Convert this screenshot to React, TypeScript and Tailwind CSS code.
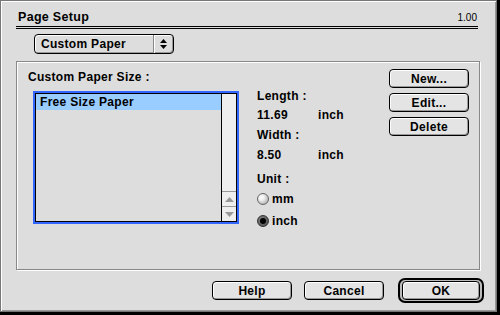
import React from 'react'

// Mac OS 9 style push button
function Btn({ label, w = 'w-[80px]' }: { label: string; w?: string }) {
  return (
    <div
      className={`${w} h-[19px] rounded-[4px] border border-black bg-[#e4e4e4] shadow-[inset_1px_1px_0_#fff,inset_-1px_-1px_0_#999] flex items-center justify-center leading-[14px]`}
    >
      {label}
    </div>
  )
}

function Radio({ on, label }: { on?: boolean; label: string }) {
  return (
    <div className="h-[14px] flex items-center gap-[3px] leading-[14px]">
      {on ? (
        <div className="w-[12px] h-[12px] rounded-full border border-[#333] bg-[radial-gradient(circle_at_40%_40%,#888,#444)] flex items-center justify-center">
          <div className="w-[6px] h-[6px] rounded-full bg-black" />
        </div>
      ) : (
        <div className="w-[12px] h-[12px] rounded-full border border-[#666] bg-[radial-gradient(circle_at_35%_35%,#fff,#eee_30%,#999)]" />
      )}
      <span>{label}</span>
    </div>
  )
}

export default function App() {
  return (
    <div className="w-[500px] h-[315px] bg-black font-['Liberation_Sans',Arial,sans-serif] text-[12px] font-bold tracking-[0.3px] text-black">
      <div className="w-[497px] h-[312px] bg-[#dddddd] border border-[#777] shadow-[inset_1px_1px_0_#fff,inset_-1px_-1px_0_#999] flex flex-col">
        {/* title */}
        <div className="ml-[15px] w-[462px] mt-[9px] flex items-end justify-between border-b-[3px] border-double border-black pb-[2px]">
          <span className="pl-[2px] h-[14px] leading-[14px] text-[12.5px]">Page Setup</span>
          <span className="pr-[1px] text-[10px] font-normal tracking-normal leading-[12px]">1.00</span>
        </div>

        {/* popup */}
        <div className="ml-[33px] mt-[5px] w-[140px] h-[20px] rounded-[4px] border border-black bg-[#dddddd] shadow-[inset_1px_1px_0_#fff,inset_-1px_-1px_0_#999] flex">
          <div className="flex-1 pl-[6px] flex items-center leading-[14px]">Custom Paper</div>
          <div className="w-[20px] border-l border-[#888] shadow-[inset_1px_0_0_#fff] flex flex-col items-center justify-center gap-[2px]">
            <svg width="7" height="4" viewBox="0 0 7 4"><path d="M0 4h7L3.5 0z" fill="#000" /></svg>
            <svg width="7" height="4" viewBox="0 0 7 4"><path d="M0 0h7L3.5 4z" fill="#000" /></svg>
          </div>
        </div>

        {/* group box */}
        <div className="ml-[15px] mt-[7px] w-[464px] h-[209px] border border-[#888] shadow-[1px_1px_0_#fff,inset_1px_1px_0_#fff] flex">
          {/* left column */}
          <div className="w-[240px] pl-[11px] pt-[8px] flex flex-col">
            <div className="h-[14px] leading-[14px]">Custom Paper Size :</div>
            <div className="ml-[5px] mt-[7px] w-[206px] h-[133px] border-2 border-[#3366ff]">
              <div className="w-full h-full border border-black flex">
                <div className="flex-1 flex flex-col">
                  <div className="h-[16px] bg-[#99ccff] pl-[4px] leading-[16px]">Free Size Paper</div>
                </div>
                <div className="w-[15px] border-l border-black bg-[#eeeeee] flex flex-col justify-end">
                  <div className="h-[15px] border-t border-[#999] flex items-center justify-center">
                    <svg width="9" height="5" viewBox="0 0 9 5"><path d="M0 5h9L4.5 0z" fill="#999" /></svg>
                  </div>
                  <div className="h-[15px] border-t border-[#999] flex items-center justify-center">
                    <svg width="9" height="5" viewBox="0 0 9 5"><path d="M0 0h9L4.5 5z" fill="#999" /></svg>
                  </div>
                </div>
              </div>
            </div>
          </div>

          {/* middle column */}
          <div className="w-[132px] pt-[27px] flex flex-col">
            <div className="h-[14px] leading-[14px]">Length :</div>
            <div className="mt-[5px] h-[14px] leading-[14px] flex">
              <span className="w-[61px]">11.69</span>
              <span>inch</span>
            </div>
            <div className="mt-[6px] h-[14px] leading-[14px]">Width :</div>
            <div className="mt-[6px] h-[14px] leading-[14px] flex">
              <span className="w-[61px]">8.50</span>
              <span>inch</span>
            </div>
            <div className="mt-[10px] h-[14px] leading-[14px]">Unit :</div>
            <div className="mt-[6px]">
              <Radio label="mm" />
            </div>
            <div className="mt-[8px]">
              <Radio on label="inch" />
            </div>
          </div>

          {/* buttons */}
          <div className="pt-[7px] flex flex-col gap-[5px]">
            <Btn label="New..." />
            <Btn label="Edit..." />
            <Btn label="Delete" />
          </div>
        </div>

        {/* bottom buttons */}
        <div className="mt-[8px] h-[25px] flex items-center justify-end pr-[12px]">
          <Btn label="Help" />
          <div className="w-[12px]" />
          <Btn label="Cancel" />
          <div className="w-[14px]" />
          <div className="w-[86px] h-[25px] rounded-[7px] border-2 border-black bg-[#bbbbbb] flex items-center justify-center">
            <Btn label="OK" w="w-[78px]" />
          </div>
        </div>
      </div>
    </div>
  )
}
